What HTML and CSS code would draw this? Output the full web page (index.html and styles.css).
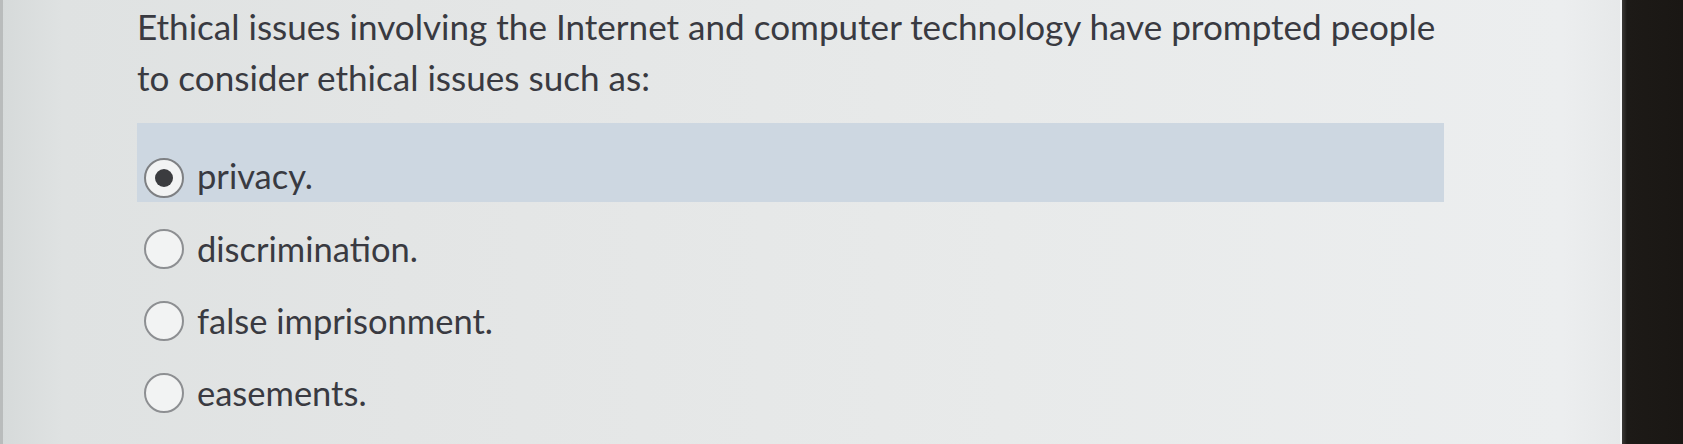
FILE: index.html
```html
<!DOCTYPE html>
<html>
<head>
<meta charset="utf-8">
<link rel="stylesheet" href="styles.css">
</head>
<body>
<div class="screen">
  <div class="page">
    <div class="quiz">
      <p class="question">Ethical issues involving the Internet and computer technology have prompted people to consider ethical issues such as:</p>
      <div class="options">
        <label class="option selected"><span class="radio"><span class="dot"></span></span><span class="label">privacy.</span></label>
        <label class="option"><span class="radio"></span><span class="label">discrimination.</span></label>
        <label class="option"><span class="radio"></span><span class="label">false imprisonment.</span></label>
        <label class="option"><span class="radio"></span><span class="label">easements.</span></label>
      </div>
    </div>
  </div>
  <div class="bezel"></div>
</div>
</body>
</html>
```
FILE: styles.css
```css
html, body {
  margin: 0;
  padding: 0;
  width: 1683px;
  height: 444px;
  overflow: hidden;
}
.screen {
  display: flex;
  width: 1683px;
  height: 444px;
}
.page {
  flex: 1;
  background: linear-gradient(90deg, #d6dada 0px, #dfe2e2 60px, #e3e5e5 400px, #e8eaea 1000px, #eceeef 1560px, #e6e8e9 1620px);
  border-left: 3px solid #b9bcbc;
  border-right: 2px solid #f4f5f6;
}
.bezel {
  width: 61px;
  background: linear-gradient(90deg, #3a3836 0px, #1d1a17 5px, #1a1714 100%);
}
.quiz {
  padding: 0 0 0 134px;
  width: 1307px;
  font-family: Lato, "Noto Sans", sans-serif;
  color: #393a41;
}
.question {
  margin: 0;
  padding-top: 1px;
  font-size: 35.1px;
  line-height: 51px;
}
.options {
  margin-top: 20px;
  display: flex;
  flex-direction: column;
}
.option {
  display: flex;
  align-items: center;
  height: 72px;
  font-size: 34.5px;
}
.option.selected {
  background: #cdd7e1;
  height: 79px;
  align-items: flex-start;
  margin-bottom: 11px;
}
.radio {
  box-sizing: border-box;
  flex: none;
  width: 40px;
  height: 40px;
  margin-left: 7px;
  margin-right: 13px;
  border-radius: 50%;
  border: 2px solid #8d8f92;
  background: #f2f3f3;
  display: flex;
  align-items: center;
  justify-content: center;
}
.selected .radio {
  border-color: #7e8083;
  margin-top: 35px;
}
.selected .label {
  margin-top: 32px;
}
.dot {
  width: 18px;
  height: 18px;
  border-radius: 50%;
  background: #3b3c3f;
}
.label {
  line-height: 42px;
}
```
